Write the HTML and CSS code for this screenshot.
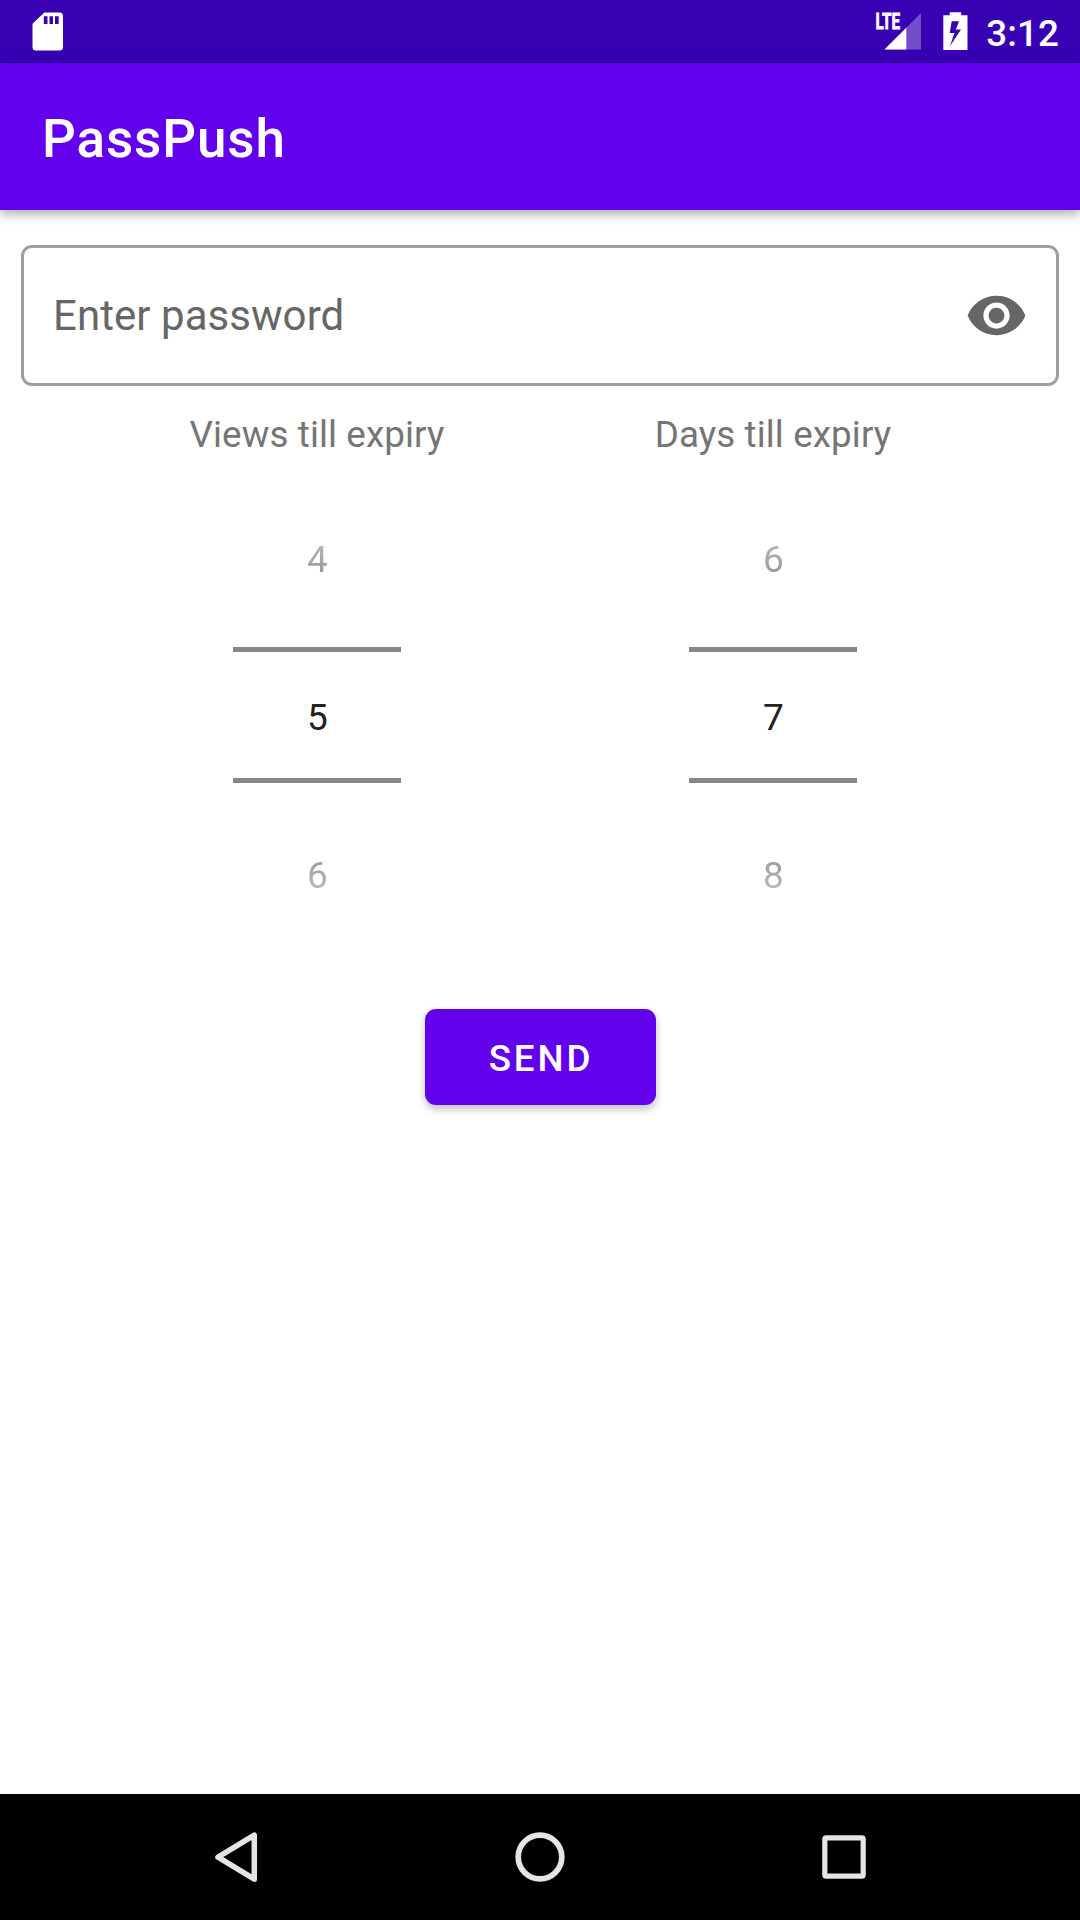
FILE: index.html
```html
<!DOCTYPE html>
<html lang="en">
<head>
<meta charset="utf-8">
<title>PassPush</title>
<link rel="stylesheet" href="styles.css">
</head>
<body>
<div class="screen">
  <header class="status-bar">
    <svg class="sd-icon" width="32" height="40" viewBox="0 0 32 40"><path fill="#fff" fill-rule="evenodd" d="M12.300.5H27.500a3.500 3.500 0 0 1 3.500 3.500V35a3.500 3.500 0 0 1-3.500 3.500H4A3.500 3.500 0 0 1 .5 35V11.800ZM11.800 4.300V12h3.700V4.300ZM17.500 4.300V12h3.500V4.300ZM23 4.300V12h3.700V4.300Z"/></svg>
    <div class="status-right">
      <svg class="signal-icon" width="48" height="40" viewBox="0 0 48 40">
        <path fill="#fff" fill-opacity=".3" d="M46 1V37.500H9.500Z"/>
        <path fill="#fff" d="M31.300 15.700V37.500H9.500Z"/>
        <text class="lte" x="0.500" y="17.200" textLength="24.500" lengthAdjust="spacingAndGlyphs">LTE</text>
      </svg>
      <svg class="battery-icon" width="25" height="39" viewBox="0 0 25 39"><path fill="#fff" fill-rule="evenodd" d="M6.700 0.300H18.200V3.300H24.500V38H.3V3.300H6.700ZM8.700 9.300L6.700 21H11.500L7 34L18 17.500H12.800L16 9.300Z"/></svg>
      <span class="clock">3:12</span>
    </div>
  </header>
  <div class="app-bar"><h1 class="title">PassPush</h1></div>
  <main class="content">
    <div class="password-field">
      <span class="hint">Enter password</span>
      <svg width="63" height="63" viewBox="0 0 24 24"><path fill="#666" d="M12 4.500C7 4.500 2.730 7.610 1 12c1.730 4.390 6 7.500 11 7.500s9.270-3.110 11-7.500c-1.730-4.390-6-7.500-11-7.500zM12 17c-2.760 0-5-2.240-5-5s2.240-5 5-5 5 2.240 5 5-2.240 5-5 5zm0-8c-1.660 0-3 1.340-3 3s1.340 3 3 3 3-1.340 3-3-1.340-3-3-3z"/></svg>
    </div>
    <div class="pickers">
      <section class="picker">
        <div class="label">Views till expiry</div>
        <div class="value faded-top">4</div>
        <div class="value selected">5</div>
        <div class="value faded-bottom">6</div>
      </section>
      <section class="picker">
        <div class="label">Days till expiry</div>
        <div class="value faded-top">6</div>
        <div class="value selected">7</div>
        <div class="value faded-bottom">8</div>
      </section>
    </div>
    <button class="send">SEND</button>
  </main>
  <nav class="nav-bar">
    <svg width="54" height="54" viewBox="0 0 54 54"><path fill="none" stroke="#e5e5e5" stroke-width="5.500" stroke-linejoin="round" d="M45.300 5.200V49.200L9 27.200Z"/></svg>
    <svg width="54" height="54" viewBox="0 0 54 54"><circle cx="27" cy="27" r="21.800" fill="none" stroke="#e5e5e5" stroke-width="5.700"/></svg>
    <svg width="54" height="54" viewBox="0 0 54 54"><rect x="7.800" y="7.800" width="38.400" height="38.400" rx="1.500" fill="none" stroke="#e5e5e5" stroke-width="5.200"/></svg>
  </nav>
</div>
</body>
</html>
```
FILE: styles.css
```css
* { box-sizing: border-box; }

body {
  margin: 0;
  font-family: Roboto, sans-serif;
  background: #fff;
}

svg { display: block; flex: none; }

.screen {
  width: 1080px;
  height: 1920px;
  display: flex;
  flex-direction: column;
  overflow: hidden;
}

.status-bar {
  height: 63px;
  flex: none;
  display: flex;
  justify-content: space-between;
  align-items: flex-start;
  padding: 12px 21px 0 32px;
  background: #3700b3;
  color: #fff;
}

.status-right { display: flex; }

.signal-icon { overflow: visible; }

.lte {
  font: 700 22px Roboto, sans-serif;
  fill: #fff;
  stroke: #fff;
  stroke-width: .8px;
}

.battery-icon { margin-left: 20px; }

.clock {
  margin-left: 18px;
  font-size: 36.75px;
  font-weight: 500;
  line-height: 43px;
  letter-spacing: .1px;
}

.app-bar {
  height: 147px;
  flex: none;
  display: flex;
  align-items: center;
  padding: 5px 0 0 42px;
  background: #6200ee;
  color: #fff;
  box-shadow: 0 4px 11px rgba(0, 0, 0, .34);
}

.title {
  margin: 0;
  font-size: 53px;
  font-weight: 500;
  line-height: 62px;
  letter-spacing: .017em;
}

.content {
  flex: 1;
  display: flex;
  flex-direction: column;
  padding: 35px 21px 0;
}

.password-field {
  height: 141px;
  display: flex;
  align-items: center;
  justify-content: space-between;
  padding: 0 28px 0 29px;
  border: 3px solid #9e9e9e;
  border-radius: 11px;
}

.hint {
  font-size: 42px;
  line-height: 50px;
  letter-spacing: .05px;
  color: #666;
}

.pickers {
  display: grid;
  grid-template-columns: 456px 456px;
  padding: 27px 0 0 68px;
}

.picker {
  display: flex;
  flex-direction: column;
  align-items: center;
}

.label {
  height: 49px;
  margin-bottom: 33px;
  font-size: 36.75px;
  line-height: 43px;
  letter-spacing: .12px;
  color: #757575;
}

.value {
  width: 168px;
  height: 126px;
  display: flex;
  align-items: center;
  justify-content: center;
  padding-left: 1px;
  font-size: 37px;
  line-height: 43px;
  color: transparent;
}

.faded-top {
  padding-top: 2px;
  margin-bottom: 26px;
  background: linear-gradient(#ebebeb, #656565) text;
}

.selected {
  height: 136px;
  padding-top: 5px;
  border-top: 5px solid #868686;
  border-bottom: 5px solid #868686;
  color: #212121;
}

.faded-bottom {
  margin-top: 26px;
  padding-top: 7px;
  background: linear-gradient(#656565, #ebebeb) text;
}

.send {
  width: 231px;
  height: 96px;
  margin-top: 74px;
  align-self: center;
  padding: 2px 0 0 2px;
  border: 0;
  border-radius: 11px;
  background: #6200ee;
  color: #fff;
  font: 500 36.75px/43px Roboto, sans-serif;
  letter-spacing: 2.9px;
  box-shadow: 0 4px 8px rgba(0, 0, 0, .26);
}

.nav-bar {
  height: 126px;
  flex: none;
  display: flex;
  align-items: center;
  justify-content: center;
  gap: 250px;
  background: #000;
}
```
